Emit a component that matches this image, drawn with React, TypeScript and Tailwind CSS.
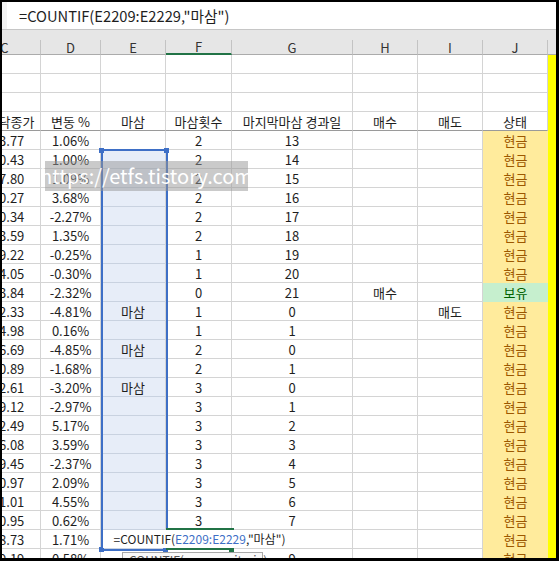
import React from "react";

type Row = [string, string, string, string, string, string, string, string];

const data: Row[] = [
  ["963.77", "1.06%", "", "2", "13", "", "", "현금"],
  ["990.43", "1.00%", "", "2", "14", "", "", "현금"],
  ["997.80", "1.09%", "", "2", "15", "", "", "현금"],
  ["990.27", "3.68%", "", "2", "16", "", "", "현금"],
  ["970.34", "-2.27%", "", "2", "17", "", "", "현금"],
  ["983.59", "1.35%", "", "2", "18", "", "", "현금"],
  ["979.22", "-0.25%", "", "1", "19", "", "", "현금"],
  ["974.05", "-0.30%", "", "1", "20", "", "", "현금"],
  ["963.84", "-2.32%", "", "0", "21", "매수", "", "보유"],
  ["952.33", "-4.81%", "마삼", "1", "0", "", "매도", "현금"],
  ["954.98", "0.16%", "", "1", "1", "", "", "현금"],
  ["906.69", "-4.85%", "마삼", "2", "0", "", "", "현금"],
  ["890.89", "-1.68%", "", "2", "1", "", "", "현금"],
  ["862.61", "-3.20%", "마삼", "3", "0", "", "", "현금"],
  ["839.12", "-2.97%", "", "3", "1", "", "", "현금"],
  ["882.49", "5.17%", "", "3", "2", "", "", "현금"],
  ["916.08", "3.59%", "", "3", "3", "", "", "현금"],
  ["899.45", "-2.37%", "", "3", "4", "", "", "현금"],
  ["920.97", "2.09%", "", "3", "5", "", "", "현금"],
  ["961.01", "4.55%", "", "3", "6", "", "", "현금"],
  ["970.95", "0.62%", "", "3", "7", "", "", "현금"],
  ["988.73", "1.71%", "", "", "", "", "", "현금"],
  ["999.19", "0.58%", "", "3", "9", "", "", "현금"],
];

const GRID = "grid grid-cols-[72px_60px_65px_66px_121px_65px_65px_65px_8px]";
const CELL = "flex items-center justify-center border-r border-b border-[#d4d4d4] text-[13px] leading-none text-[#1e1e1e] whitespace-nowrap overflow-hidden";

function ColumnHeaders() {
  const letters = ["C", "D", "E", "F", "G", "H", "I", "J"];
  return (
    <div className={`${GRID} h-[16px] ml-[-33px]`}>
      {letters.map((l) => (
        <div
          key={l}
          className={`flex items-center justify-center border-r border-[#c3c3c3] text-[13px] leading-none text-[#333] ${
            l === "F" ? "border-b-2 border-b-[#217346]" : "border-b border-b-[#ababab]"
          }`}
        >
          {l}
        </div>
      ))}
      <div className="border-b border-b-[#ababab]" />
    </div>
  );
}

function EmptyRow() {
  return (
    <div className={`${GRID} h-[19px] ml-[-33px]`}>
      {Array.from({ length: 8 }).map((_, i) => (
        <div key={i} className={CELL} />
      ))}
      <div className="bg-[#ffff00]" />
    </div>
  );
}

function TitleRow() {
  const titles = ["코스닥종가", "변동 %", "마삼", "마삼횟수", "마지막마삼 경과일", "매수", "매도", "상태"];
  return (
    <div className={`${GRID} h-[19px] ml-[-33px]`}>
      {titles.map((t) => (
        <div
          key={t}
          className="flex items-center justify-center border-r border-r-[#d4d4d4] border-b border-b-[#9a9a9a] text-[13px] leading-none text-[#1e1e1e] whitespace-nowrap"
        >
          {t}
        </div>
      ))}
      <div className="bg-[#ffff00]" />
    </div>
  );
}

function DataRow({ row, index }: { row: Row; index: number }) {
  const selected = index >= 1 && index <= 21;
  const status = row[7];
  return (
    <div className={`${GRID} h-[19px] shrink-0 ml-[-33px]`}>
      <div className={CELL}>{row[0]}</div>
      <div className={CELL}>{row[1]}</div>
      <div className={`${CELL} ${selected ? "bg-[#e7edf8] border-b-[#c9d2e0]" : ""}`}>{row[2]}</div>
      <div className={CELL}>{row[3]}</div>
      <div className={CELL}>{row[4]}</div>
      <div className={CELL}>{row[5]}</div>
      <div className={CELL}>{row[6]}</div>
      <div
        className={`flex items-center justify-center text-[13px] leading-none ${
          status === "보유" ? "bg-[#c6efce] text-[#006100]" : "bg-[#ffeb9c] text-[#9c5700]"
        }`}
      >
        {status}
      </div>
      <div className="bg-[#ffff00]" />
    </div>
  );
}

export default function App() {
  return (
    <div className="w-[559px] h-[561px] bg-black pt-[2px] pl-[2px] pr-[3px] pb-[3px] font-['Noto_Sans_CJK_KR','Noto_Sans',sans-serif]">
      <div className="relative w-full h-full bg-[#e6e6e6] overflow-hidden flex flex-col">
        {/* formula bar */}
        <div className="h-[28px] shrink-0 flex bg-white border-b border-[#c6c6c6]">
          <div className="w-[5px] bg-[#f2f2f2]" />
          <div className="flex items-center pl-[12px] pt-[2px] text-[14.7px] leading-none text-[#1e1e1e] whitespace-nowrap">
            =COUNTIF(E2209:E2229,"마삼")
          </div>
        </div>
        <div className="h-[10px] shrink-0" />
        <ColumnHeaders />
        <div className="flex flex-col bg-white">
          <EmptyRow />
          <EmptyRow />
          <EmptyRow />
          <TitleRow />
          {data.map((r, i) => (
            <DataRow key={i} row={r} index={i} />
          ))}
        </div>

        {/* selected range outline */}
        <div className="absolute left-[99px] top-[147px] w-[67px] h-[402px] border-2 border-[#3e6fc6]" />
        <div className="absolute left-[97px] top-[146px] w-[5px] h-[5px] bg-[#3e6fc6]" />
        <div className="absolute left-[162px] top-[146px] w-[5px] h-[5px] bg-[#3e6fc6]" />
        <div className="absolute left-[97px] top-[545px] w-[5px] h-[5px] bg-[#3e6fc6]" />
        <div className="absolute left-[161px] top-[545px] w-[5px] h-[5px] bg-[#3e6fc6]" />

        {/* active cell */}
        <div className="absolute left-[164px] top-[526px] w-[68px] h-[22px] border-y-2 border-[#217346]" />
        <div className="absolute left-[227px] top-[545px] w-[5px] h-[5px] bg-[#217346]" />

        {/* in-cell editor */}
        <div className="absolute left-[101px] top-[528px] w-[193px] h-[18px] bg-white flex items-center justify-center text-[12px] leading-none text-[#1e1e1e] whitespace-nowrap">
          =COUNTIF(<span className="text-[#3e6fc6]">E2209:E2229</span>,"마삼")
        </div>

        {/* tooltip */}
        <div className="absolute left-[120px] top-[550px] w-[141px] h-[20px] border border-[#a8a8a8] bg-[#f9f9f9] flex items-start pl-[6px] pt-[1px] text-[12px] leading-none text-[#555] whitespace-nowrap">
          COUNTIF(<b>range</b>, criteria)
        </div>

        {/* watermark */}
        <div className="absolute left-[43px] top-[159px] w-[203px] h-[30px] bg-[rgba(150,150,150,0.5)] flex items-center justify-center text-[20px] leading-none text-white whitespace-nowrap">
          https://etfs.tistory.com
        </div>
      </div>
    </div>
  );
}
